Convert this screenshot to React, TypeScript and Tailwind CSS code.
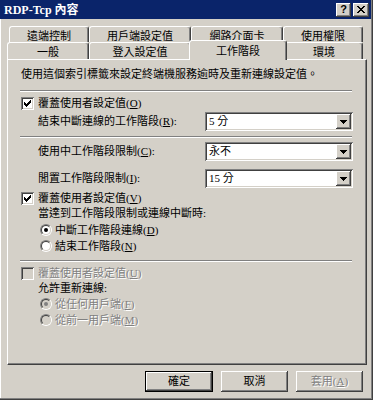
import React from "react";

const raised =
  "shadow-[inset_-1px_-1px_0_#404040,inset_1px_1px_0_#ffffff,inset_-2px_-2px_0_#808080,inset_2px_2px_0_#d4d0c8]";
const sunken =
  "shadow-[inset_1px_1px_0_#808080,inset_-1px_-1px_0_#ffffff,inset_2px_2px_0_#404040,inset_-2px_-2px_0_#d4d0c8]";
const grayText = "text-[#808080] [text-shadow:1px_1px_0_#ffffff]";

function U({ children }: { children: React.ReactNode }) {
  return <span className="underline underline-offset-[1px]">{children}</span>;
}

function CheckBox({ checked, disabled }: { checked?: boolean; disabled?: boolean }) {
  return (
    <span
      className={`w-[13px] h-[13px] shrink-0 flex items-center justify-center ${sunken} ${
        disabled ? "bg-[#d4d0c8]" : "bg-white"
      }`}
    >
      {checked && (
        <svg width="7" height="7" viewBox="0 0 7 7" shapeRendering="crispEdges">
          <path d="M0 2h1v1h1v1h1V3h1V2h1V1h1V0h1v3h-1v1h-1v1h-1v1h-1v1h-1V6H1V5H0z" fill="#000" />
        </svg>
      )}
    </span>
  );
}

function Radio({ checked, disabled }: { checked?: boolean; disabled?: boolean }) {
  return (
    <span className="w-[12px] h-[12px] shrink-0 flex rounded-full border border-t-[#808080] border-l-[#808080] border-b-white border-r-white">
      <span
        className={`flex-1 flex items-center justify-center rounded-full border border-t-[#404040] border-l-[#404040] border-b-[#d4d0c8] border-r-[#d4d0c8] ${
          disabled ? "bg-[#d4d0c8]" : "bg-white"
        }`}
      >
        {checked && (
          <span className={`w-[4px] h-[4px] rounded-full ${disabled ? "bg-[#808080]" : "bg-black"}`} />
        )}
      </span>
    </span>
  );
}

function Combo({ value }: { value: string }) {
  return (
    <div className={`w-[148px] h-[19px] ml-auto bg-white flex items-center p-[2px] ${sunken}`}>
      <span className="flex-1 pl-[2px] leading-[15px]">{value}</span>
      <span className={`w-[15px] h-[15px] bg-[#d4d0c8] flex items-center justify-center ${raised}`}>
        <svg width="7" height="4" viewBox="0 0 7 4" shapeRendering="crispEdges">
          <path d="M0 0h7v1H6v1H5v1H4v1H3V3H2V2H1V1H0z" fill="#000" />
        </svg>
      </span>
    </div>
  );
}

function Separator({ className = "" }: { className?: string }) {
  return <div className={`h-[2px] border-t border-t-[#808080] border-b border-b-white ${className}`} />;
}

type Tab = { label: string; w: number };

const backRow: Tab[] = [
  { label: "遠端控制", w: 80 },
  { label: "用戶端設定值", w: 102 },
  { label: "網路介面卡", w: 92 },
  { label: "使用權限", w: 80 },
];

const frontRow: Tab[] = [
  { label: "一般", w: 82 },
  { label: "登入設定值", w: 102 },
  { label: "工作階段", w: 94 },
  { label: "環境", w: 78 },
];

function TabItem({ tab, selected }: { tab: Tab; selected?: boolean }) {
  if (selected) {
    return (
      <div
        style={{ width: tab.w + 4 }}
        className="relative z-10 -mx-[2px] -mt-[2px] h-[20px] self-start bg-[#d4d0c8] border-l border-t border-white border-r border-r-[#404040] rounded-t-[3px] shadow-[inset_-1px_0_0_#808080] flex justify-center pt-[3px]"
      >
        {tab.label}
      </div>
    );
  }
  return (
    <div
      style={{ width: tab.w }}
      className="h-full bg-[#d4d0c8] border-l border-t border-white border-r border-r-[#404040] rounded-t-[3px] shadow-[inset_-1px_0_0_#808080] flex justify-center pt-[2px]"
    >
      {tab.label}
    </div>
  );
}

export default function App() {
  return (
    <div className="w-[373px] h-[400px] bg-[#d4d0c8] flex flex-col text-[11px] leading-[15px] text-black font-['Liberation_Serif','Noto_Sans_CJK_TC',serif] shadow-[inset_-1px_-1px_0_#404040,inset_-2px_-2px_0_#808080,inset_1px_0_0_#ffffff] select-none">
      {/* Title bar */}
      <div className="h-[19px] mr-[2px] bg-[#0a246a] flex items-center pl-[4px] pr-[2px]">
        <span className="text-white font-bold text-[12px] leading-[14px] font-['Liberation_Serif','Noto_Sans_CJK_TC',serif]">
          RDP-Tcp 內容
        </span>
        <div className="ml-auto flex gap-[2px]">
          <span className={`w-[15px] h-[14px] bg-[#d4d0c8] flex items-center justify-center ${raised}`}>
            <span className="font-bold text-[11px] leading-[11px] font-['Liberation_Sans',sans-serif]">?</span>
          </span>
          <span className={`w-[16px] h-[14px] bg-[#d4d0c8] flex items-center justify-center ${raised}`}>
            <svg width="8" height="7" viewBox="0 0 8 7" shapeRendering="crispEdges">
              <path
                d="M0 0h2v1h1v1h2V1h1V0h2v1H7v1H6v1H5v1h1v1h1v1h1v1H6V6H5V5H3v1H2v1H0V6h1V5h1V4h1V3H2V2H1V1H0z"
                fill="#000"
              />
            </svg>
          </span>
        </div>
      </div>

      {/* Tabs */}
      <div className="mt-[7px] flex flex-col">
        <div className="h-[16px] flex pl-[9px]">
          {backRow.map((t) => (
            <TabItem key={t.label} tab={t} />
          ))}
        </div>
        <div className="h-[17px] flex pl-[7px]">
          {frontRow.map((t) => (
            <TabItem key={t.label} tab={t} selected={t.label === "工作階段"} />
          ))}
        </div>
      </div>

      {/* Panel */}
      <div className="ml-[7px] w-[360px] h-[306px] border-l border-t border-white border-r border-b border-r-[#404040] border-b-[#404040] shadow-[inset_-1px_-1px_0_#808080] flex flex-col pl-[12px] pr-[13px] pt-[6px]">
        <div className="h-[17px] flex items-center pl-[1px]">
          使用這個索引標籤來設定終端機服務逾時及重新連線設定值。
        </div>
        <Separator className="mt-[7px] mr-[1px]" />

        <div className="mt-[3px] h-[16px] flex items-center pl-[1px] gap-[4px]">
          <CheckBox checked />
          <span>
            覆蓋使用者設定值(<U>O</U>)
          </span>
        </div>
        <div className="mt-[1px] h-[19px] flex items-center">
          <span className="pl-[18px]">
            結束中斷連線的工作階段(<U>R</U>):
          </span>
          <Combo value="5 分" />
        </div>
        <Separator className="mt-[5px] mr-[1px]" />

        <div className="mt-[4px] h-[19px] flex items-center">
          <span className="pl-[18px]">
            使用中工作階段限制(<U>C</U>):
          </span>
          <Combo value="永不" />
        </div>
        <div className="mt-[8px] h-[19px] flex items-center">
          <span className="pl-[18px]">
            閒置工作階段限制(<U>I</U>):
          </span>
          <Combo value="15 分" />
        </div>

        <div className="mt-[2px] h-[16px] flex items-center pl-[1px] gap-[4px]">
          <CheckBox checked />
          <span>
            覆蓋使用者設定值(<U>V</U>)
          </span>
        </div>
        <div className="h-[15px] flex items-center pl-[18px]">當達到工作階段限制或連線中斷時:</div>
        <div className="mt-[1px] h-[16px] flex items-center pl-[20px] gap-[3px]">
          <Radio checked />
          <span>
            中斷工作階段連線(<U>D</U>)
          </span>
        </div>
        <div className="h-[16px] flex items-center pl-[20px] gap-[3px]">
          <Radio />
          <span>
            結束工作階段(<U>N</U>)
          </span>
        </div>
        <Separator className="mt-[6px] mr-[1px]" />

        <div className="mt-[3px] h-[16px] flex items-center pl-[1px] gap-[4px]">
          <CheckBox disabled />
          <span className={grayText}>
            覆蓋使用者設定值(<U>U</U>)
          </span>
        </div>
        <div className="h-[15px] flex items-center pl-[18px]">允許重新連線:</div>
        <div className="h-[16px] flex items-center pl-[20px] gap-[3px]">
          <Radio checked disabled />
          <span className={grayText}>
            從任何用戶端(<U>F</U>)
          </span>
        </div>
        <div className="h-[16px] flex items-center pl-[20px] gap-[3px]">
          <Radio disabled />
          <span className={grayText}>
            從前一用戶端(<U>M</U>)
          </span>
        </div>
      </div>

      {/* Buttons */}
      <div className="mt-[6px] flex justify-end gap-[8px] pr-[10px]">
        <button className="w-[68px] h-[21px] border border-black p-0 bg-[#d4d0c8] flex">
          <span className={`flex-1 flex items-center justify-center ${raised}`}>確定</span>
        </button>
        <button className={`w-[67px] h-[21px] bg-[#d4d0c8] flex items-center justify-center ${raised}`}>
          取消
        </button>
        <button className={`w-[67px] h-[21px] bg-[#d4d0c8] flex items-center justify-center ${raised}`}>
          <span className={grayText}>
            套用(<U>A</U>)
          </span>
        </button>
      </div>
    </div>
  );
}
